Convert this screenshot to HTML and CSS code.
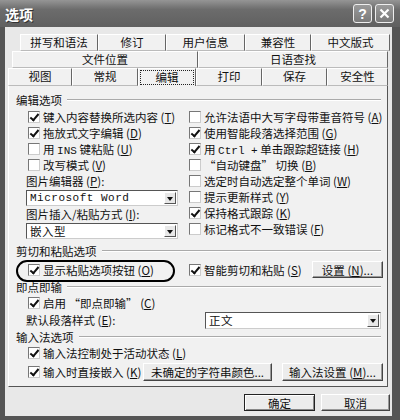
FILE: index.html
```html
<!DOCTYPE html>
<html lang="zh">
<head>
    <meta charset="UTF-8">
    <title>选项</title>
    <link rel="stylesheet" href="styles.css">
</head>
<body>
    <div class="window">
        <div class="titlebar">
            <span class="title">选项</span>
            <div class="caption">
                <span class="cap-btn">?</span>
                <span class="cap-btn">
                    <svg width="11" height="11" viewBox="0 0 11 11"><path d="M1.5 1.5 L9.5 9.5 M9.5 1.5 L1.5 9.5" stroke="#fff" stroke-width="2.2"/></svg>
                </span>
            </div>
        </div>

        <div class="client">
            <!-- 选项卡 -->
            <div class="tab-row row1">
                <span class="tab">拼写和语法</span>
                <span class="tab">修订</span>
                <span class="tab">用户信息</span>
                <span class="tab">兼容性</span>
                <span class="tab">中文版式</span>
            </div>
            <div class="tab-row row2">
                <span class="tab">文件位置</span>
                <span class="tab">日语查找</span>
            </div>
            <div class="tab-row row3">
                <span class="tab">视图</span>
                <span class="tab">常规</span>
                <span class="tab active"><span class="focus">编辑</span></span>
                <span class="tab">打印</span>
                <span class="tab">保存</span>
                <span class="tab">安全性</span>
            </div>

            <div class="panel">
                <div class="group-title"><span>编辑选项</span><i></i></div>
                <div class="edit-grid">
                    <div class="col">
                        <div class="check"><span class="box on"></span><span>键入内容替换所选内容 (<u>T</u>)</span></div>
                        <div class="check"><span class="box on"></span><span>拖放式文字编辑 (<u>D</u>)</span></div>
                        <div class="check"><span class="box"></span><span>用 <span class="mono">INS</span> 键粘贴 (<u>U</u>)</span></div>
                        <div class="check"><span class="box"></span><span>改写模式 (<u>V</u>)</span></div>
                        <div class="field-label">图片编辑器 (<u>P</u>):</div>
                        <div class="select wide"><span class="value mono">Microsoft Word</span><span class="arrow"></span></div>
                        <div class="field-label">图片插入/粘贴方式 (<u>I</u>):</div>
                        <div class="select wide second"><span class="value">嵌入型</span><span class="arrow"></span></div>
                    </div>
                    <div class="col">
                        <div class="check"><span class="box"></span><span>允许法语中大写字母带重音符号 (<u>A</u>)</span></div>
                        <div class="check"><span class="box on"></span><span>使用智能段落选择范围 (<u>G</u>)</span></div>
                        <div class="check"><span class="box on"></span><span>用 <span class="mono">Ctrl +</span> 单击跟踪超链接 (<u>H</u>)</span></div>
                        <div class="check"><span class="box"></span><span>“自动键盘” 切换 (<u>B</u>)</span></div>
                        <div class="check"><span class="box"></span><span>选定时自动选定整个单词 (<u>W</u>)</span></div>
                        <div class="check"><span class="box"></span><span>提示更新样式 (<u>Y</u>)</span></div>
                        <div class="check"><span class="box on"></span><span>保持格式跟踪 (<u>K</u>)</span></div>
                        <div class="check"><span class="box"></span><span>标记格式不一致错误 (<u>F</u>)</span></div>
                    </div>
                </div>

                <div class="group-title cut-title"><span>剪切和粘贴选项</span><i></i></div>
                <div class="cut-row">
                    <div class="check left"><span class="box on"></span><span>显示粘贴选项按钮 (<u>O</u>)</span></div>
                    <span class="ring"></span>
                    <div class="check right"><span class="box on"></span><span>智能剪切和粘贴 (<u>S</u>)</span></div>
                    <button class="btn settings">设置 (<u>N</u>)...</button>
                </div>

                <div class="group-title"><span>即点即输</span><i></i></div>
                <div class="check indent"><span class="box on"></span><span>启用 “即点即输” (<u>C</u>)</span></div>
                <div class="style-row">
                    <span>默认段落样式 (<u>E</u>):</span>
                    <div class="select style"><span class="value">正文</span><span class="arrow"></span></div>
                </div>

                <div class="group-title"><span>输入法选项</span><i></i></div>
                <div class="check indent"><span class="box on"></span><span>输入法控制处于活动状态 (<u>L</u>)</span></div>
                <div class="ime-row">
                    <div class="check"><span class="box on"></span><span>输入时直接嵌入 (<u>K</u>)</span></div>
                    <button class="btn color">未确定的字符串颜色...</button>
                    <button class="btn ime">输入法设置 (<u>M</u>)...</button>
                </div>
            </div>

            <div class="footer">
                <button class="btn default">确定</button>
                <button class="btn cancel">取消</button>
            </div>
        </div>
    </div>
</body>
</html>
```

FILE: styles.css
```css
* {
    box-sizing: border-box;
}
body {
    margin: 0;
    background: #fff;
    font-family: "Noto Sans CJK SC", "Liberation Sans", sans-serif;
    font-size: 11.5px;
    color: #111;
}
.window {
    width: 400px;
    height: 420px;
    background: #555;
    display: flex;
    flex-direction: column;
}
.titlebar {
    height: 27px;
    display: flex;
    align-items: center;
    justify-content: space-between;
    padding: 0 6px 0 5px;
    background: linear-gradient(#959595, #6c6c6c 35%, #606060);
    color: #fff;
}
.title {
    font-size: 14px;
    font-weight: bold;
    text-shadow: 1px 1px 0 #333;
}
.caption {
    display: flex;
    gap: 3px;
}
.cap-btn {
    width: 19px;
    height: 19px;
    border: 1px solid #eee;
    border-radius: 3px;
    background: linear-gradient(#9a9a9a, #7a7a7a);
    display: flex;
    align-items: center;
    justify-content: center;
    font: bold 14px "Liberation Sans", sans-serif;
    color: #fff;
}
.client {
    flex: 1;
    margin: 0 8px 4px 5px;
    background: #e8e8e8;
    padding-top: 7px;
    display: flex;
    flex-direction: column;
}

/* 选项卡 */
.tab-row {
    display: grid;
    height: 17px;
}
.row1 {
    grid-template-columns: 78px 68px 79px 66px 1fr;
    margin: 0 2px 0 15px;
}
.row2 {
    grid-template-columns: 186px 1fr;
    margin: 0 4px 0 7px;
}
.row3 {
    grid-template-columns: 64px 66px 58px 66px 65px 1fr;
    margin: 0 4px 0 3px;
    height: 18px;
}
.tab {
    background: #f1f1f1;
    border-top: 1px solid #fff;
    border-left: 1px solid #fff;
    border-right: 1px solid #666;
    border-bottom: 1px solid #bbb;
    text-align: center;
    line-height: 15px;
}
.tab.active {
    border-bottom: none;
    padding: 1px 1px 0 1px;
}
.focus {
    display: block;
    height: 15px;
    border: 1px dotted #222;
    line-height: 13px;
}

.panel {
    height: 301px;
    margin: 0 4px 0 3px;
    background: #f1f1f1;
    border-left: 1px solid #fff;
    border-right: 1px solid #555;
    border-bottom: 1px solid #555;
    padding: 6px 4px 0 7px;
}
.group-title {
    display: flex;
    align-items: center;
    height: 16px;
}
.group-title i {
    flex: 1;
    margin: 0 2px 0 5px;
    border-top: 1px solid #aaa;
    border-bottom: 1px solid #fff;
}
.edit-grid {
    display: grid;
    grid-template-columns: 162px 1fr;
    padding-left: 10px;
    margin-top: 1px;
}
.check {
    display: flex;
    align-items: center;
    height: 16px;
    white-space: nowrap;
}
.box {
    width: 12px;
    height: 12px;
    margin: 0 3px 0 2px;
    background: #fff;
    border: 1px solid #777;
    border-right-color: #ccc;
    border-bottom-color: #ccc;
    flex: none;
    position: relative;
}
.box.on::after {
    content: "";
    position: absolute;
    left: 3px;
    top: 0px;
    width: 3px;
    height: 7px;
    border-right: 2px solid #111;
    border-bottom: 2px solid #111;
    transform: rotate(40deg);
}
.col + .col .box,
.cut-row .right .box {
    margin-left: 1px;
}
.mono {
    font-family: "Liberation Mono", monospace;
    font-size: 11px;
}
.field-label {
    height: 16px;
    line-height: 16px;
}
.select {
    display: flex;
    height: 16px;
    background: #fff;
    border: 1px solid #555;
    border-right-color: #ccc;
    border-bottom-color: #ccc;
    padding: 1px;
}
.select.wide {
    width: 152px;
    margin-top: 1px;
}
.select.second {
    margin-top: 1px;
}
.select .value {
    flex: 1;
    line-height: 12px;
    padding-left: 2px;
    letter-spacing: 0.5px;
}
.arrow {
    width: 12px;
    background: #e8e8e8;
    border: 1px solid #fff;
    border-right-color: #555;
    border-bottom-color: #555;
    position: relative;
}
.arrow::after {
    content: "";
    position: absolute;
    left: 2px;
    top: 4px;
    border: 3px solid transparent;
    border-top: 4px solid #111;
}

.cut-title {
    margin-top: 4px;
}
.cut-row {
    position: relative;
    display: flex;
    align-items: center;
    height: 19px;
    padding-left: 10px;
    margin-top: 1px;
}
.cut-row .left {
    width: 162px;
}
.ring {
    position: absolute;
    left: 0;
    top: 0;
    width: 159px;
    height: 22px;
    border: 2px solid #000;
    border-radius: 11px;
}
.btn {
    font-family: "Noto Sans CJK SC", "Liberation Sans", sans-serif;
    font-size: 11.5px;
    color: #111;
    background: #ececec;
    border: 1px solid #fff;
    border-right-color: #444;
    border-bottom-color: #444;
    box-shadow: inset -1px -1px 0 #999;
    padding: 0;
    height: 17px;
    line-height: 14px;
}
.settings {
    margin-left: auto;
    width: 71px;
}
.indent {
    padding-left: 10px;
}
.style-row {
    display: flex;
    align-items: center;
    height: 18px;
    padding-left: 10px;
}
.select.style {
    margin-left: auto;
    width: 176px;
    height: 17px;
    margin-right: 2px;
}
.ime-row {
    display: flex;
    align-items: center;
    height: 18px;
    padding-left: 10px;
    margin-top: 2px;
}
.ime-row .btn {
    height: 18px;
}
.color {
    margin-left: auto;
    width: 129px;
}
.ime {
    margin-left: 10px;
    width: 101px;
}
.footer {
    display: flex;
    justify-content: flex-end;
    gap: 6px;
    margin: 7px 2px 0 0;
}
.footer .default {
    width: 71px;
    border: 1px solid #222;
    box-shadow: inset 1px 1px 0 #fff, inset -1px -1px 0 #888;
}
.footer .cancel {
    width: 69px;
}
```
